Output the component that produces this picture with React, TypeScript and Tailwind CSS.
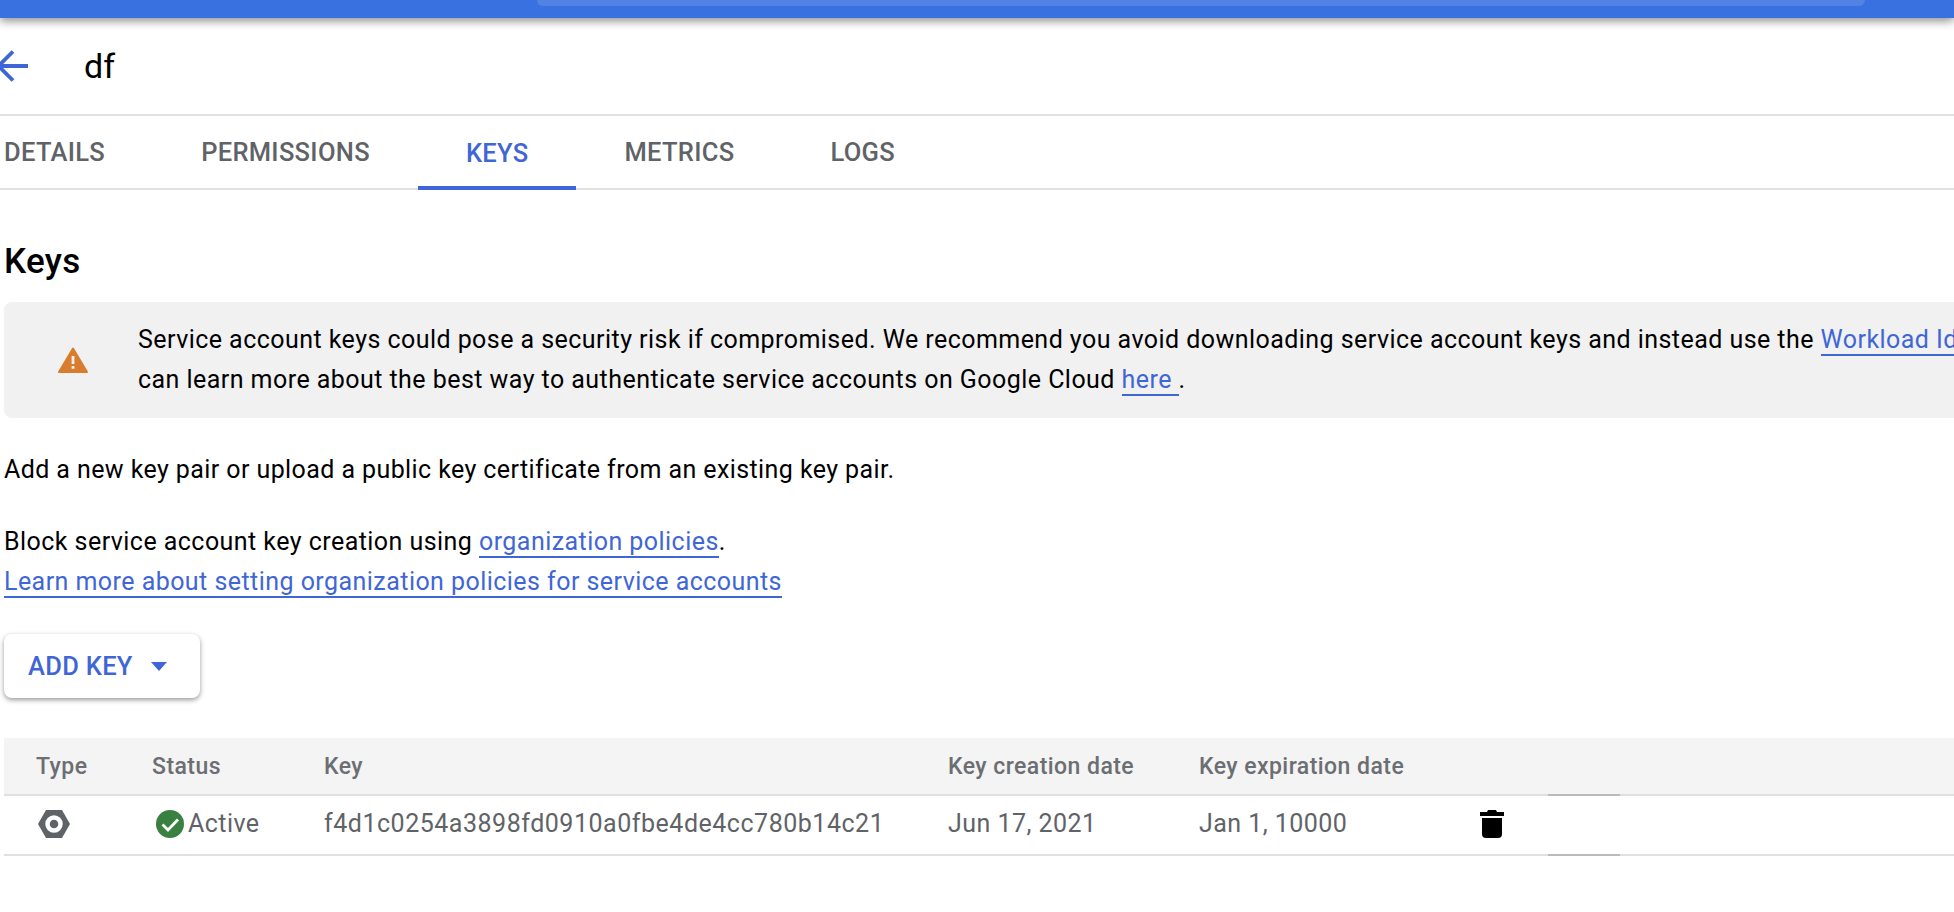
import React from "react";

const tabs = ["DETAILS", "PERMISSIONS", "KEYS", "METRICS", "LOGS"];
const link = "text-[#3f66d6] border-b-2 border-[#3f66d6]";

function Warning() {
  return (
    <svg width="30" height="26" viewBox="0 0 30 26" className="shrink-0">
      <path d="M15 1.5 L29 25 H1 Z" fill="#d97c2e" stroke="#d97c2e" strokeWidth="2" strokeLinejoin="round" />
      <rect x="13.6" y="9" width="2.8" height="8" fill="#f1f1f1" />
      <rect x="13.6" y="19" width="2.8" height="2.8" fill="#f1f1f1" />
    </svg>
  );
}

function Hex() {
  return (
    <svg width="32" height="28" viewBox="0 0 32 28">
      <path d="M8 0 H24 L32 14 L24 28 H8 L0 14 Z" fill="#5f6368" />
      <circle cx="16" cy="14" r="6.5" fill="none" stroke="#fff" strokeWidth="4.5" />
    </svg>
  );
}

function Check() {
  return (
    <svg width="28" height="28" viewBox="0 0 28 28" className="shrink-0">
      <circle cx="14" cy="14" r="14" fill="#3a8040" />
      <path d="M6.5 14.5 L12 20 L22 9.5" fill="none" stroke="#fff" strokeWidth="2.8" />
    </svg>
  );
}

function Trash() {
  return (
    <svg width="24" height="28" viewBox="0 0 24 28">
      <path d="M8 0 H16 L17 2 H24 V6 H0 V2 H7 Z" fill="#000" />
      <path d="M2 8 H22 V24 Q22 28 18 28 H6 Q2 28 2 24 Z" fill="#000" />
    </svg>
  );
}

export default function App() {
  return (
    <div className="w-[1954px] h-[912px] overflow-hidden bg-white text-black font-['Roboto',sans-serif] text-[25px] tracking-[0.45px]">
      <header className="relative z-10 h-[18px] bg-[#3972e0] shadow-[0_3px_10px_rgba(0,0,0,0.45)]">
        <div className="ml-[537px] w-[1328px] h-[6px] bg-[#5283e4] rounded-b-lg" />
      </header>

      <div className="h-[96px] flex items-center">
        <svg width="32" height="32" viewBox="0 0 32 32" className="ml-[-4px] shrink-0">
          <path d="M32 16 H3 M17 1.5 L2.5 16 L17 30.5" fill="none" stroke="#3f66d6" strokeWidth="3.8" />
        </svg>
        <h1 className="ml-[56px] text-[34px] leading-none tracking-normal">df</h1>
      </div>

      <nav className="h-[76px] flex border-y-2 border-[#e0e0e0]">
        <div className="flex ml-[-44px]">
          {tabs.map((t) => (
            <div
              key={t}
              className={
                t === "KEYS"
                  ? "-mb-[2px] px-[48px] pt-[4px] flex items-center font-medium text-[25.5px] tracking-[0.3px] text-[#3f66d6] border-b-4 border-[#3f66d6]"
                  : "px-[48px] flex items-center font-medium text-[25.5px] tracking-[0.3px] text-[#5f6368]"
              }
            >
              {t}
            </div>
          ))}
        </div>
      </nav>

      <main className="pl-[4px]">
        <h2 className="mt-[50px] text-[35px] leading-[44px] font-medium tracking-[0.3px]">Keys</h2>

        <div className="mt-[18px] h-[116px] flex items-center rounded-l-lg bg-[#f1f1f1] overflow-hidden">
          <div className="ml-[54px] mr-[50px]">
            <Warning />
          </div>
          <p className="leading-[40px] whitespace-nowrap">
            Service account keys could pose a security risk if compromised. We recommend you avoid downloading service account keys and instead use the <span className={link}>Workload Identity</span>
            <br />
            can learn more about the best way to authenticate service accounts on Google Cloud <span className={link}>here </span>.
          </p>
        </div>

        <p className="mt-[32px] leading-[40px] tracking-[0.41px]">Add a new key pair or upload a public key certificate from an existing key pair.</p>

        <p className="mt-[32px] leading-[40px]">
          Block service account key creation using <span className={link}>organization policies</span>.
          <br />
          <span className={link}>Learn more about setting organization policies for service accounts</span>
        </p>

        <button className="mt-[32px] w-[196px] h-[64px] flex items-center pl-[24px] rounded-lg bg-white shadow-[0_2px_5px_rgba(0,0,0,0.4)] font-medium text-[#3f66d6] text-[25.5px] tracking-[0.3px]">
          ADD KEY
          <svg width="16" height="9" viewBox="0 0 16 9" className="ml-[18px]">
            <path d="M0 0 H16 L8 9 Z" fill="#3f66d6" />
          </svg>
        </button>

        <div className="mt-[40px]">
          <div className="h-[58px] pt-[2px] flex items-center bg-[#f4f4f4] border-b-2 border-[#e0e0e0] font-medium text-[23px] tracking-[0.45px] text-[#6b6e72] relative">
            <div className="w-[148px] pl-[32px]">Type</div>
            <div className="w-[172px]">Status</div>
            <div className="w-[624px]">Key</div>
            <div className="w-[251px]">Key creation date</div>
            <div>Key expiration date</div>
            <div className="absolute left-[1544px] -bottom-[2px] w-[72px] h-[2px] bg-[#bbbbbb]" />
          </div>
          <div className="h-[60px] pb-[2px] flex items-center border-b-2 border-[#e0e0e0] text-[#5f6368] relative">
            <div className="w-[148px] pl-[34px] flex items-center"><Hex /></div>
            <div className="w-[172px] pl-[4px] flex items-center gap-[4px]"><Check /><span>Active</span></div>
            <div className="w-[624px] tracking-[0.52px]">f4d1c0254a3898fd0910a0fbe4de4cc780b14c21</div>
            <div className="w-[251px]">Jun 17, 2021</div>
            <div className="w-[281px]">Jan 1, 10000</div>
            <Trash />
            <div className="absolute left-[1544px] -bottom-[2px] w-[72px] h-[2px] bg-[#bbbbbb]" />
          </div>
        </div>
      </main>
    </div>
  );
}
